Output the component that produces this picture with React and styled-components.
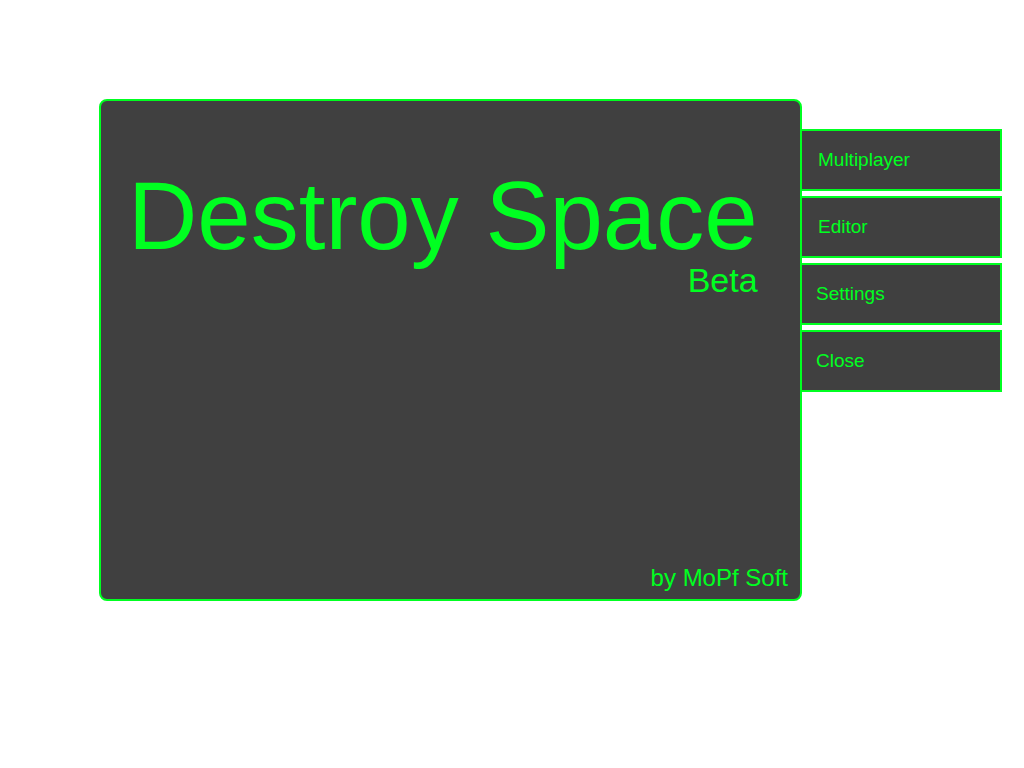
import React from 'react';
import styled, { createGlobalStyle } from 'styled-components';

const green = '#00ff21';
const dark = '#404040';

const GlobalStyle = createGlobalStyle`
  body {
    margin: 0;
    background: #ffffff;
    font-family: "Liberation Sans", Arial, sans-serif;
  }
`;

const Screen = styled.div`
  display: flex;
  align-items: flex-start;
  padding: 99px 0 0 99px;
`;

const Panel = styled.div`
  box-sizing: border-box;
  width: 703px;
  height: 502px;
  background: ${dark};
  border: 2px solid ${green};
  border-radius: 8px;
  display: flex;
  flex-direction: column;
  justify-content: space-between;
  color: ${green};
`;

const TitleBlock = styled.div`
  align-self: flex-start;
  display: flex;
  flex-direction: column;
  align-items: flex-end;
  margin: 67px 0 0 27px;
`;

const Title = styled.h1`
  margin: 0;
  font-size: 96px;
  font-weight: normal;
  line-height: 95px;
  white-space: nowrap;
`;

const Subtitle = styled.span`
  font-size: 34px;
  line-height: 34px;
`;

const Credits = styled.span`
  align-self: flex-end;
  font-size: 24px;
  line-height: 1;
  padding: 0 12px 9px 0;
`;

const Menu = styled.nav`
  display: flex;
  flex-direction: column;
  gap: 5px;
  margin: 30px 0 0 -2px;
  position: relative;
  z-index: 1;
`;

const MenuButton = styled.button`
  box-sizing: border-box;
  width: 202px;
  height: 62px;
  margin: 0;
  padding: 0 0 0 ${p => p.indent}px;
  border: 2px solid ${green};
  background: ${dark};
  color: ${green};
  font-family: "Liberation Sans", Arial, sans-serif;
  font-size: 19px;
  text-align: left;
  cursor: pointer;
`;

const items = [
  { label: 'Multiplayer', indent: 16 },
  { label: 'Editor', indent: 16 },
  { label: 'Settings', indent: 14 },
  { label: 'Close', indent: 14 },
];

export default function App() {
  return (
    <>
      <GlobalStyle />
      <Screen>
        <Panel>
          <TitleBlock>
            <Title>Destroy Space</Title>
            <Subtitle>Beta</Subtitle>
          </TitleBlock>
          <Credits>by MoPf Soft</Credits>
        </Panel>
        <Menu>
          {items.map(item => (
            <MenuButton key={item.label} indent={item.indent}>
              {item.label}
            </MenuButton>
          ))}
        </Menu>
      </Screen>
    </>
  );
}
